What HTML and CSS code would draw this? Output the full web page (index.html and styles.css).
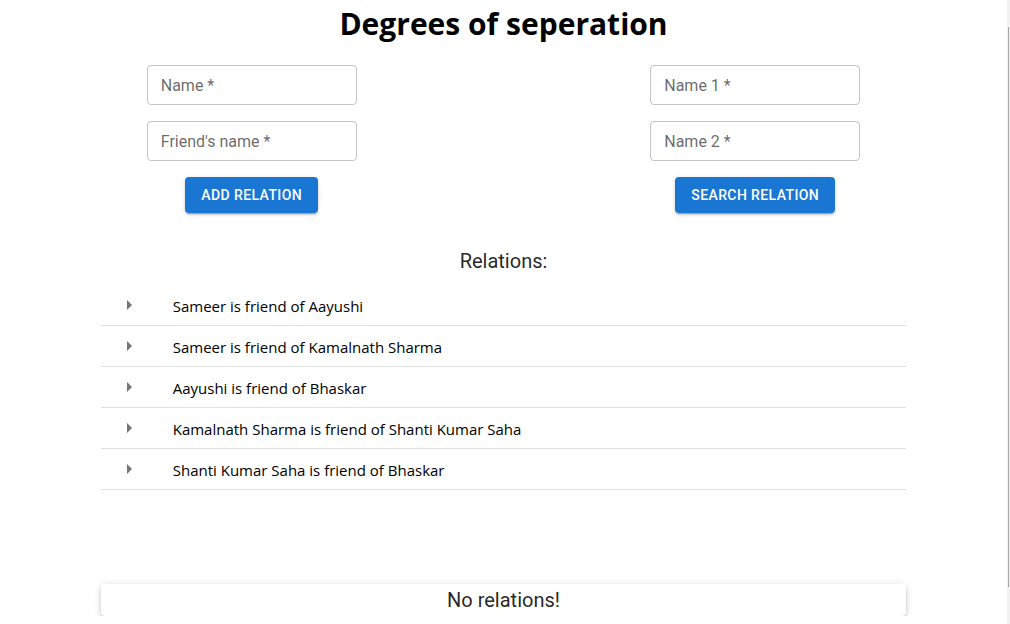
FILE: index.html
```html
<!DOCTYPE html>
<html lang="en">
<head>
<meta charset="utf-8">
<title>Degrees of seperation</title>
<link rel="stylesheet" href="styles.css">
</head>
<body>
<div class="page">
  <h1 class="title">Degrees of seperation</h1>
  <div class="forms">
    <div class="form-col">
      <input class="field" type="text" placeholder="Name *">
      <input class="field" type="text" placeholder="Friend's name *">
      <button class="btn" type="button">Add relation</button>
    </div>
    <div class="form-col">
      <input class="field" type="text" placeholder="Name 1 *">
      <input class="field" type="text" placeholder="Name 2 *">
      <button class="btn" type="button">Search relation</button>
    </div>
  </div>
  <h2 class="section-title">Relations:</h2>
  <ul class="list">
    <li class="item"><span class="item-icon"><svg viewBox="0 0 24 24" width="24" height="24"><path d="M10 17l5-5-5-5v10z"/></svg></span><span class="item-text">Sameer is friend of Aayushi</span></li>
    <li class="item"><span class="item-icon"><svg viewBox="0 0 24 24" width="24" height="24"><path d="M10 17l5-5-5-5v10z"/></svg></span><span class="item-text">Sameer is friend of Kamalnath Sharma</span></li>
    <li class="item"><span class="item-icon"><svg viewBox="0 0 24 24" width="24" height="24"><path d="M10 17l5-5-5-5v10z"/></svg></span><span class="item-text">Aayushi is friend of Bhaskar</span></li>
    <li class="item"><span class="item-icon"><svg viewBox="0 0 24 24" width="24" height="24"><path d="M10 17l5-5-5-5v10z"/></svg></span><span class="item-text">Kamalnath Sharma is friend of Shanti Kumar Saha</span></li>
    <li class="item"><span class="item-icon"><svg viewBox="0 0 24 24" width="24" height="24"><path d="M10 17l5-5-5-5v10z"/></svg></span><span class="item-text">Shanti Kumar Saha is friend of Bhaskar</span></li>
  </ul>
  <div class="result">No relations!</div>
</div>
<div class="scrollbar"><div class="scroll-thumb"></div></div>
</body>
</html>
```

FILE: styles.css
```css
html, body {
  margin: 0;
  padding: 0;
  background: #fff;
}
body {
  font-family: Roboto, "Liberation Sans", sans-serif;
  color: rgba(0, 0, 0, 0.87);
  overflow: hidden;
}
.page {
  margin-right: 3px;
  display: flex;
  flex-direction: column;
  align-items: center;
}
.title {
  margin: 0;
  font-family: "Open Sans", "Noto Sans", sans-serif;
  font-weight: 700;
  font-size: 30px;
  line-height: 48px;
  color: #000;
  text-align: center;
}
.forms {
  align-self: stretch;
  display: grid;
  grid-template-columns: 1fr 1fr;
  margin-top: 17px;
}
.form-col {
  display: flex;
  flex-direction: column;
  align-items: center;
  gap: 16px;
}
.field {
  box-sizing: border-box;
  width: 210px;
  height: 40px;
  margin: 0;
  padding: 0 13px;
  border: 1px solid #c4c4c4;
  border-radius: 4px;
  font-family: Roboto, sans-serif;
  font-size: 16px;
  color: rgba(0, 0, 0, 0.87);
  background: #fff;
  outline: none;
}
.field::placeholder {
  color: rgba(0, 0, 0, 0.6);
  opacity: 1;
}
.btn {
  box-sizing: border-box;
  height: 36px;
  padding: 6px 16px;
  border: 0;
  border-radius: 4px;
  background: #1976d2;
  color: #fff;
  font-family: Roboto, sans-serif;
  font-weight: 500;
  font-size: 14px;
  line-height: 24px;
  letter-spacing: 0.4px;
  text-transform: uppercase;
  box-shadow: 0 3px 1px -2px rgba(0,0,0,0.2), 0 2px 2px 0 rgba(0,0,0,0.14), 0 1px 5px 0 rgba(0,0,0,0.12);
}
.section-title {
  margin: 32px 0 0;
  font-family: Roboto, sans-serif;
  font-weight: 400;
  font-size: 20px;
  line-height: 32px;
  color: rgba(0, 0, 0, 0.87);
}
.list {
  list-style: none;
  margin: 0;
  padding: 8px 0;
  width: 80%;
}
.item {
  display: flex;
  align-items: center;
  height: 40px;
  padding: 0 16px;
  border-bottom: 1px solid #e0e0e0;
}
.item-icon {
  display: flex;
  min-width: 56px;
  color: #757575;
}
.item-icon svg {
  fill: currentColor;
}
.item-text {
  font-family: "Open Sans", "Noto Sans", sans-serif;
  font-size: 15px;
  line-height: 24px;
  color: #000;
  padding-top: 1px;
}
.result {
  box-sizing: border-box;
  width: 80%;
  margin-top: 86px;
  height: 32px;
  border-radius: 4px;
  background: #fff;
  text-align: center;
  font-family: Roboto, sans-serif;
  font-size: 20px;
  line-height: 32px;
  color: rgba(0, 0, 0, 0.87);
  box-shadow: 0 3px 3px -2px rgba(0,0,0,0.2), 0 3px 4px 0 rgba(0,0,0,0.14), 0 1px 8px 0 rgba(0,0,0,0.12);
}
.scrollbar {
  position: fixed;
  top: 0;
  right: 0;
  bottom: 0;
  width: 3px;
  background: #f1f1f1;
}
.scroll-thumb {
  position: absolute;
  top: 27px;
  bottom: 37px;
  left: 1px;
  width: 1px;
  background: #a8a8a8;
}
```
